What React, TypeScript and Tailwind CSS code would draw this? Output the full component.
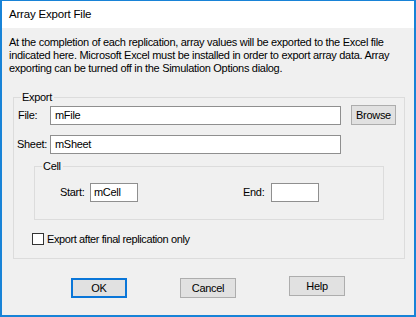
import React from "react";

const font = { fontFamily: '"Liberation Sans", Arial, sans-serif' };

function Btn({ children, focused }: { children: React.ReactNode; focused?: boolean }) {
  return (
    <div
      className={
        "w-[56px] h-[20px] flex items-center justify-center bg-[#e1e1e1] text-[11px] text-black " +
        (focused ? "border-2 border-[#0a76d8]" : "border border-[#adadad]")
      }
    >
      {children}
    </div>
  );
}

export default function App() {
  return (
    <div
      className="w-[416px] h-[317px] bg-[#f0f0f0] border-[#1883d7] border-l-2 border-r-2 border-b-2 border-t flex flex-col text-black tracking-[-0.3px]"
      style={font}
    >
      <div className="h-[27px] shrink-0 bg-white pl-[7px] flex items-center text-[11.5px] tracking-[-0.2px]">
        Array Export File
      </div>
      <p className="mt-[8px] pl-[7px] text-[11px] leading-[13px] whitespace-nowrap tracking-[-0.3px]">
        At the completion of each replication, array values will be exported to the Excel file
        <br />
        indicated here. Microsoft Excel must be installed in order to export array data. Array
        <br />
        exporting can be turned off in the Simulation Options dialog.
      </p>
      <fieldset className="mt-[16px] ml-[11px] w-[392px] border border-[#dcdcdc] p-0 m-0 shrink-0">
        <legend className="ml-[7px] pl-[1px] pr-[2px] text-[11px] leading-[13px]">Export</legend>
        <div className="pl-[3px] pt-[1px] pb-[13px] flex flex-col">
          <div className="flex items-center h-[20px]">
            <span className="w-[33px] pl-[1px] text-[11px]">File:</span>
            <div className="w-[291px] h-[19px] bg-white border border-[#8f8f8f] flex items-center pl-[4px] text-[11px]">
              mFile
            </div>
            <div className="ml-[10px] w-[45px] h-[20px] bg-[#e1e1e1] border border-[#adadad] flex items-center justify-center text-[11px]">
              Browse
            </div>
          </div>
          <div className="flex items-center h-[19px] mt-[10px]">
            <span className="w-[33px] text-[11px]">Sheet:</span>
            <div className="w-[291px] h-[19px] bg-white border border-[#8f8f8f] flex items-center pl-[4px] text-[11px]">
              mSheet
            </div>
          </div>
          <fieldset className="mt-[6px] ml-[17px] w-[350px] border border-[#dcdcdc] p-0 m-0">
            <legend className="ml-[7px] pl-[1px] pr-[2px] text-[11px] leading-[13px]">Cell</legend>
            <div className="flex items-center h-[19px] mt-[10px] mb-[17px] pl-[25px]">
              <span className="w-[30px] text-[11px]">Start:</span>
              <div className="w-[48px] h-[19px] bg-white border border-[#8f8f8f] flex items-center pl-[3px] text-[11px]">
                mCell
              </div>
              <span className="ml-[105px] w-[28px] text-[11px]">End:</span>
              <div className="w-[48px] h-[19px] bg-white border border-[#8f8f8f]" />
            </div>
          </fieldset>
          <div className="flex items-center mt-[13px] pl-[15px] h-[12px]">
            <div className="w-[12px] h-[12px] bg-white border border-[#333333]" />
            <span className="ml-[3px] text-[11px] tracking-[-0.4px]">Export after final replication only</span>
          </div>
        </div>
      </fieldset>
      <div className="flex mt-[19px] pl-[69px] gap-[53px]">
        <Btn focused>OK</Btn>
        <Btn>Cancel</Btn>
        <div className="-mt-[2px]">
          <Btn>Help</Btn>
        </div>
      </div>
    </div>
  );
}
